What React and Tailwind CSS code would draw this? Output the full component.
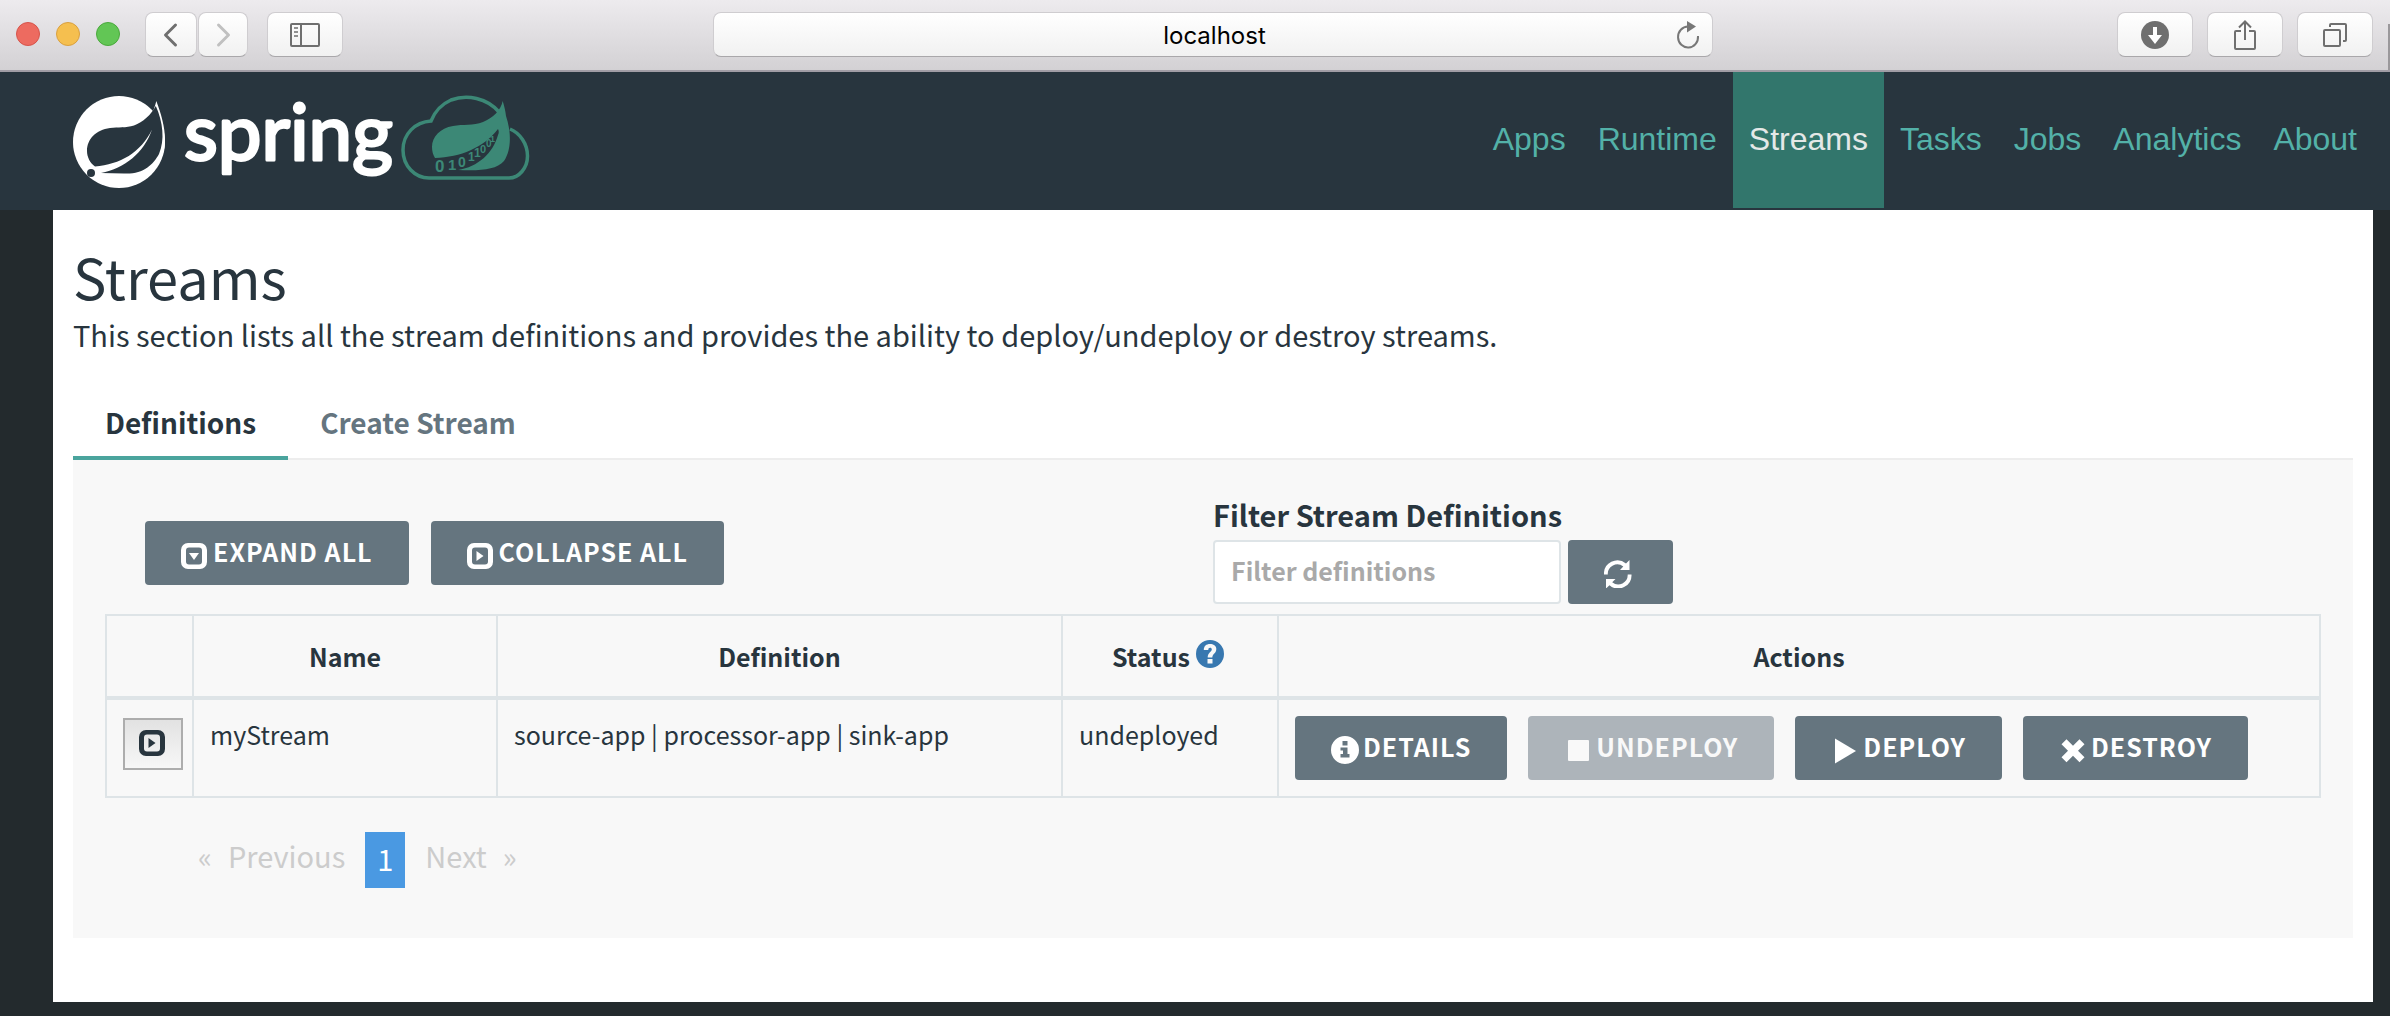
const ICONS = {
  collapse: (
    <>
      <path fillRule="evenodd" d="M7 2h12a7 7 0 0 1 7 7v12a7 7 0 0 1-7 7H7a7 7 0 0 1-7-7V9a7 7 0 0 1 7-7zm1 4.500A3 3 0 0 0 5 9.500v11a3 3 0 0 0 3 3h10a3 3 0 0 0 3-3v-11a3 3 0 0 0-3-3z" />
      <path d="M8 12h10l-5 7z" />
    </>
  ),
  expand: (
    <>
      <path fillRule="evenodd" d="M7 2h12a7 7 0 0 1 7 7v12a7 7 0 0 1-7 7H7a7 7 0 0 1-7-7V9a7 7 0 0 1 7-7zm1 4.500A3 3 0 0 0 5 9.500v11a3 3 0 0 0 3 3h10a3 3 0 0 0 3-3v-11a3 3 0 0 0-3-3z" />
      <path d="M9.500 10v10l7-5z" />
    </>
  ),
  info: (
    <path fillRule="evenodd" d="M14 0a14 14 0 1 1 0 28 14 14 0 0 1 0-28zm-2.500 5v4.500h5V5zM9.500 11.500v3H12V18H9.500v3.500h9V18H16.500v-6.500z" />
  ),
  stop: <rect x="4" y="4" width="21" height="21" rx="1" />,
  play: <path d="M4 2.500v25L25 15z" />,
  remove: (
    <path d="M7.500 3.200 14 9.700l6.500-6.500 5 5-6.500 6.500 6.500 6.500-5 5-6.500-6.500-6.500 6.500-5-5L9 14.700 2.500 8.200z" />
  ),
  refresh: (
    <>
      <path d="M0 14.500A13.300 13.300 0 0 1 22 3.600L25.500 0v10H16l3.300-3.500A9.500 9.500 0 0 0 3.800 14.500z" />
      <path d="M27.500 14.500A13.300 13.300 0 0 1 5.500 25.200L2 28.500V19h9.500l-3.300 3.300a9.500 9.500 0 0 0 15.500-7.800z" />
    </>
  ),
  question: (
    <path fillRule="evenodd" d="M14 0a14 14 0 1 1 0 28 14 14 0 0 1 0-28zm-2.500 19v4.500h5V19zm.2-1.500h4.600c0-3.800 4-4 4-8.500 0-3.500-3-5-6.300-5-3.700 0-6.200 2-6.200 6h4.500c0-1.500.6-2.200 1.800-2.200 1 0 1.700.6 1.700 1.600 0 2.400-4.100 3-4.100 8.100z" />
  ),
};

function Icon({ name, className = '' }) {
  return (
    <svg width="28" height="28" viewBox="0 0 28 28" fill="currentColor" aria-hidden="true" className={`shrink-0 ${className}`}>
      {ICONS[name]}
    </svg>
  );
}

function ToolButton({ label, className, children }) {
  return (
    <button
      aria-label={label}
      className={`flex h-[45px] items-center justify-center rounded-lg border border-[#cfcdd0] border-b-[#a9a7aa] bg-linear-to-b from-white to-[#f1f1f1] text-[#6f6f6f] ${className}`}
    >
      {children}
    </button>
  );
}

function BrowserBar() {
  return (
    <div className="flex h-18 items-start border-b-2 border-[#a19da5] bg-linear-to-b from-[#edebee] to-[#d3d1d4] pt-3 pl-4">
      <div className="flex flex-1">
        <div className="flex h-11 items-center gap-4">
          <span className="size-6 rounded-full border border-[#d6544b] bg-[#ed6b60]" />
          <span className="size-6 rounded-full border border-[#d9a040] bg-[#f5bf4f]" />
          <span className="size-6 rounded-full border border-[#4aa93c] bg-[#62c655]" />
        </div>
        <ToolButton label="Back" className="ml-[25px] w-[52px]">
          <svg width="16" height="26" viewBox="0 0 16 26" fill="none" stroke="currentColor" strokeWidth="3" strokeLinecap="round" strokeLinejoin="round">
            <path d="M12.500 3 2.500 13l10 10" />
          </svg>
        </ToolButton>
        <ToolButton label="Forward" className="ml-px w-[50px]">
          <svg width="16" height="26" viewBox="0 0 16 26" fill="none" stroke="#c0c0c0" strokeWidth="3" strokeLinecap="round" strokeLinejoin="round">
            <path d="m3.500 3 10 10-10 10" />
          </svg>
        </ToolButton>
        <ToolButton label="Show sidebar" className="ml-[19px] w-[76px]">
          <svg width="30" height="24" viewBox="0 0 30 24" fill="none" stroke="currentColor" strokeWidth="2">
            <rect x="1" y="1" width="28" height="22" rx="1" />
            <path d="M11 1v22" />
            <path d="M4 5h4M4 9h4M4 13h4" strokeWidth="1.500" />
          </svg>
        </ToolButton>
      </div>
      <div className="ml-9 flex h-[45px] w-[1000px] items-center rounded-lg border border-[#cfcdd0] border-b-[#a9a7aa] bg-linear-to-b from-white to-[#f1f1f1] pr-3">
        <input
          aria-label="Address"
          defaultValue="localhost"
          className='min-w-0 flex-1 bg-transparent pt-0.5 pl-10 text-center font-["Inter",sans-serif] text-2xl text-black outline-none'
        />
        <button aria-label="Reload" className="text-[#777]">
          <svg width="24" height="28" viewBox="0 0 24 28" fill="none" stroke="currentColor" strokeWidth="2">
            <path d="M12 5.500a10 10.500 0 1 0 10 9.500" />
            <path d="M11 0l9 5.500-9 6z" fill="currentColor" stroke="none" />
          </svg>
        </button>
      </div>
      <div className="flex flex-1 justify-end gap-[14px]">
        <ToolButton label="Downloads" className="w-[76px]">
          <svg width="28" height="28" viewBox="0 0 28 28">
            <circle cx="14" cy="14" r="14" fill="currentColor" />
            <path d="M12 6h4v8h5l-7 9-7-9h5z" fill="#fff" />
          </svg>
        </ToolButton>
        <ToolButton label="Share" className="w-[76px]">
          <svg width="24" height="32" viewBox="0 0 24 32" fill="none" stroke="currentColor" strokeWidth="2">
            <path d="M8 12H3q-1 0-1 1v16q0 1 1 1h18q1 0 1-1V13q0-1-1-1h-5M12 21V3M6 8.500l6-6 6 6" />
          </svg>
        </ToolButton>
        <ToolButton label="Tabs" className="w-[76px]">
          <svg width="26" height="26" viewBox="0 0 26 26" fill="none" stroke="currentColor" strokeWidth="2">
            <rect x="2" y="8" width="16" height="16" rx="1" />
            <path d="M8 5V3q0-1 1-1h14q1 0 1 1v15q0 1-1 1h-2" />
          </svg>
        </ToolButton>
      </div>
      <div className="ml-[15px] h-[46px] w-0.5 self-end bg-[#9a989b]" />
    </div>
  );
}

function Logo() {
  return (
    <a href="#home" aria-label="Spring Cloud Data Flow">
      <svg width="456" height="92" viewBox="0 0 456 92" className="overflow-visible">
        <circle cx="46" cy="46" r="46" fill="#fff" />
        <path d="M83.300 5C88 18 92 30 92 44c0 20-12 36-30 36L70 30c6-5 11-15 13.300-25z" fill="#fff" />
        <path
          d="M82.800 10C78 19 70 26 61 29.500c-8 2.500-16 1.500-24 2.500-14 2-23 11-23 23 0 6 3 12 8 15.500 25-2 46-14 57-37C71 57 52 72 28 77l23 .500C70 78.500 80 69 86 58c6-14 4-32-3.200-48z"
          fill="#28353e"
        />
        <circle cx="18" cy="77" r="4" fill="#28353e" />
        <text
          x="111"
          y="64"
          fill="#fff"
          stroke="#fff"
          strokeWidth="3"
          strokeLinejoin="round"
          className='font-["Lato",sans-serif] text-[78px]'
        >
          spring
        </text>
        <g transform="translate(328 0)">
          <path
            d="M98 16C86 2 66-2 50 4 41 8 34 15 30 25 14 26 2 38 2 54c0 16 12 28 26 28h80c10 0 18.500-10 18.500-22 0-12-7.500-23-17.500-27"
            fill="none"
            stroke="#3c8876"
            strokeWidth="3.500"
          />
          <path
            d="M101.700 5C100 14 92 22 82 26c-10 4-20 2-30 4-13 2-21 11-21 21 0 4 1 8 3 11 26-1 48-10 63-29 1 2 1 4 0 6-5 18-20 32-40 35 22 1 38 0 46-9 8-12 7-30 2-45-.5-5-1.800-10-3.300-15z"
            fill="#3c8876"
          />
          <g fill="#3c8876" className='font-["Liberation_Sans",sans-serif] font-bold'>
            <text x="34" y="76" className="text-[17px]">0</text>
            <text x="47" y="74" className="text-[15px]">1</text>
            <text x="57" y="71" className="text-[14px]">0</text>
            <text x="67" y="65" className="text-[12px]">1</text>
            <text x="73" y="61" className="text-[12px]">1</text>
            <text x="79" y="57" className="text-[11px]">0</text>
            <text x="85" y="51" className="text-[10px]">0</text>
            <text x="89" y="46" className="text-[9px]">1</text>
          </g>
        </g>
      </svg>
    </a>
  );
}

const NAV = ['Apps', 'Runtime', 'Streams', 'Tasks', 'Jobs', 'Analytics', 'About'];

function NavBar() {
  return (
    <header className="flex h-[138px] items-start justify-between bg-[#28353e] pr-[17px] pl-[73px]">
      <div className="pt-6">
        <Logo />
      </div>
      <nav className='flex font-["Liberation_Sans",sans-serif] text-[32px]'>
        {NAV.map((item) => (
          <a
            key={item}
            href={`#${item.toLowerCase()}`}
            className={`flex h-[136px] items-center px-4 pb-0.5 ${
              item === 'Streams' ? 'bg-[#32766c] text-[#e4e8e7]' : 'text-[#53b1a8]'
            }`}
          >
            {item}
          </a>
        ))}
      </nav>
    </header>
  );
}

function ActionButton({ icon, children, disabled }) {
  return (
    <button
      disabled={disabled}
      className="flex h-16 items-center gap-1 rounded bg-[#65757f] px-9 text-[25px] leading-9 font-semibold tracking-[1px] whitespace-nowrap text-white disabled:bg-[#adb4ba] disabled:text-[#f9f9f9]"
    >
      <Icon name={icon} className="mt-1" />
      <span className="pb-1">{children}</span>
    </button>
  );
}

function Toolbar() {
  return (
    <div className="grid grid-cols-2 pt-9 pb-2.5">
      <div className="flex items-start gap-[22px] pt-[25px] pl-18">
        <ActionButton icon="collapse">EXPAND ALL</ActionButton>
        <ActionButton icon="expand">COLLAPSE ALL</ActionButton>
      </div>
      <form onSubmit={(e) => e.preventDefault()}>
        <label htmlFor="filter" className="mb-2 block text-[29px] leading-9 font-bold">
          Filter Stream Definitions
        </label>
        <div className="flex gap-[7px]">
          <input
            id="filter"
            placeholder="Filter definitions"
            className="h-16 w-[348px] rounded border-2 border-[#dee4e7] bg-white px-4 pb-1 text-[25px] font-bold outline-none placeholder:text-[#a9a9a9]"
          />
          <button aria-label="Refresh" className="flex h-16 w-[105px] items-center rounded bg-[#65757f] pl-9 text-white">
            <Icon name="refresh" className="mt-1" />
          </button>
        </div>
      </form>
    </div>
  );
}

const TH = 'h-[83px] border-2 border-b-4 border-[#dee4e7] text-center font-semibold';
const TD = 'border-2 border-[#dee4e7] px-4 py-4 align-top';

function StreamsTable() {
  return (
    <table className="w-full table-fixed border-collapse text-[25px] leading-9">
      <colgroup>
        <col className="w-[87px]" />
        <col className="w-[304px]" />
        <col className="w-[565px]" />
        <col className="w-[216px]" />
        <col />
      </colgroup>
      <thead>
        <tr>
          <th className={TH} />
          <th className={TH}>Name</th>
          <th className={TH}>Definition</th>
          <th className={TH}>
            <span className="flex items-center justify-center gap-1.5 pr-1">
              Status
              <Icon name="question" className="mb-1 text-[#3878b0]" />
            </span>
          </th>
          <th className={TH}>Actions</th>
        </tr>
      </thead>
      <tbody>
        <tr>
          <td className={TD}>
            <button
              aria-label="Expand myStream"
              className="mt-0.5 flex h-[52px] w-[60px] items-center border-2 border-[#adadad] bg-linear-to-b from-[#e2e2e2] to-[#f7f7f7] pl-3.5"
            >
              <Icon name="expand" className="mb-1" />
            </button>
          </td>
          <td className={TD}>myStream</td>
          <td className={TD}>source-app | processor-app | sink-app</td>
          <td className={TD}>undeployed</td>
          <td className={TD}>
            <div className="flex gap-[21px]">
              <ActionButton icon="info">DETAILS</ActionButton>
              <ActionButton icon="stop" disabled>UNDEPLOY</ActionButton>
              <ActionButton icon="play">DEPLOY</ActionButton>
              <ActionButton icon="remove">DESTROY</ActionButton>
            </div>
          </td>
        </tr>
      </tbody>
    </table>
  );
}

export default function App() {
  return (
    <div className='flex min-h-screen flex-col bg-[#232a2d] font-["Noto_Sans_CJK_SC",sans-serif] text-[#28353e]'>
      <BrowserBar />
      <NavBar />
      <main className="mr-[17px] mb-3.5 ml-[53px] flex-1 bg-white px-5 pt-7 pb-16">
        <h1 className="text-[56px] leading-[76px]">Streams</h1>
        <p className="text-[29px] leading-10">
          This section lists all the stream definitions and provides the ability to deploy/undeploy or destroy streams.
        </p>
        <div role="tablist" className="mt-8 flex border-b-2 border-[#ededed] text-[28px] leading-10 font-bold">
          <button role="tab" aria-selected="true" className="-mb-0.5 border-b-4 border-[#4aa49d] px-8 pt-4 pb-3.5">
            Definitions
          </button>
          <button role="tab" aria-selected="false" className="-mb-0.5 border-b-4 border-transparent px-8 pt-4 pb-3.5 text-[#65757f]">
            Create Stream
          </button>
        </div>
        <section className="bg-[#f8f8f8] pb-[50px]">
          <Toolbar />
          <div className="px-8">
            <StreamsTable />
            <nav aria-label="Pagination" className="mt-[34px] ml-[93px] flex h-14 items-center text-[29px] leading-10 text-[#ccc]">
              <button disabled className="flex gap-4 pb-2.5">
                <span>«</span>
                <span>Previous</span>
              </button>
              <button aria-current="page" className="mx-5 h-14 bg-[#4a99e2] px-3 pb-1 text-white">
                1
              </button>
              <button disabled className="flex gap-4 pb-2.5">
                <span>Next</span>
                <span>»</span>
              </button>
            </nav>
          </div>
        </section>
      </main>
    </div>
  );
}
